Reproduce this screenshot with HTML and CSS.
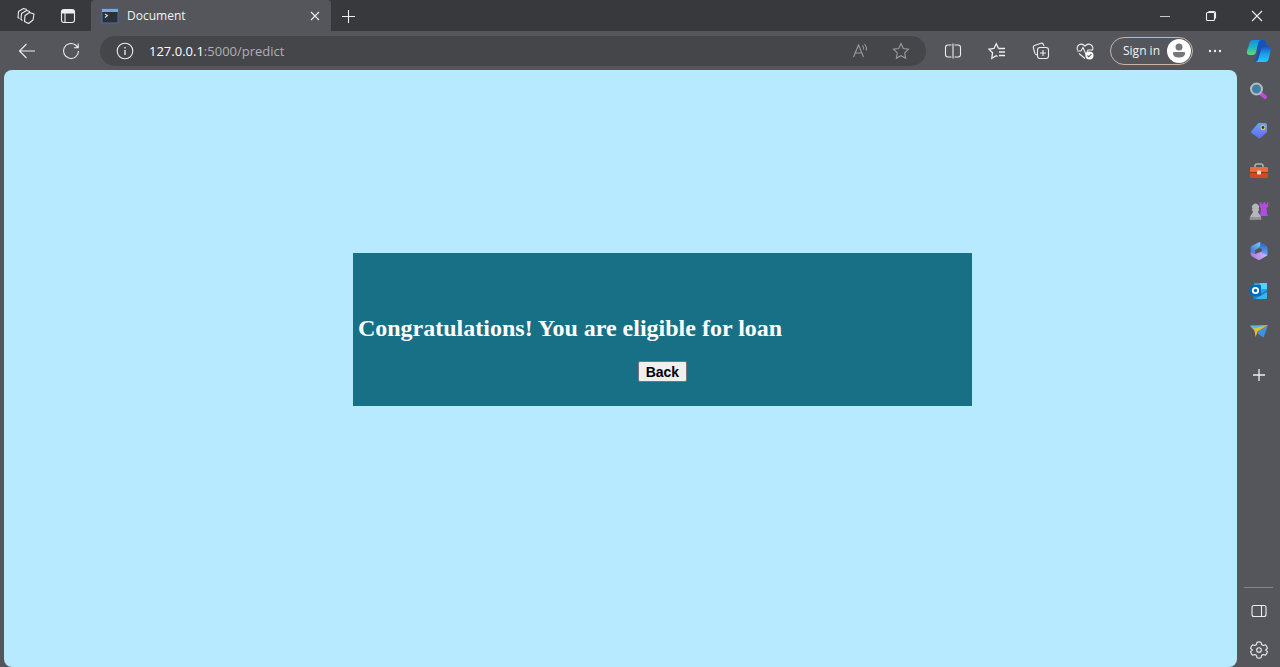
FILE: index.html
```html
<!DOCTYPE html>
<html lang="en">
<head>
<meta charset="utf-8">
<title>Document</title>
<link rel="stylesheet" href="styles.css">
</head>
<body>
<div class="browser">
  <header class="titlebar">
    <div class="title-tools">
      <button class="icon-btn" aria-label="Workspaces"><svg width="20" height="20" viewBox="0 0 20 20" stroke-linejoin="round"><path d="M9 9.500 13.500 6.500 18 8 17 14 12.500 17.500 8.500 15.500ZM6.500 14.500 5 13.500 5.500 7.500 10.500 4.500 14 5.500M3.500 12.500 2 11.500 2.500 5.500 7.500 2.500 11 3.500"/></svg></button>
      <button class="icon-btn" aria-label="Tab actions"><svg width="20" height="20" viewBox="0 0 20 20"><rect x="3.500" y="3.500" width="13" height="13" rx="2.500"/><path d="M4 5h12M4 6.500h12" stroke-width="2"/><path d="M7 7v9"/></svg></button>
    </div>
    <div class="tab">
      <svg width="18" height="16" viewBox="0 0 18 16"><rect x="1" y="1" width="16" height="14" fill="#2b3139" stroke="#486ba0"/><path d="M1 2.500h16" stroke="#79a6df" stroke-width="3"/><path d="m4 6 2.500 1.500L4 9.500" stroke="#d5dbe3"/></svg>
      <span class="tab-title">Document</span>
      <button class="tab-close" aria-label="Close tab"><svg width="10" height="10" viewBox="0 0 10 10"><path d="m1 1 8 8M9 1 1 9"/></svg></button>
    </div>
    <button class="new-tab" aria-label="New tab"><svg width="14" height="14" viewBox="0 0 14 14"><path d="M7.500 1v13M1 7.500h13"/></svg></button>
    <div class="window-controls">
      <button class="icon-btn" aria-label="Minimize"><svg width="10" height="10" viewBox="0 0 10 10"><path d="M0 5.500h10" stroke-width=".8"/></svg></button>
      <button class="icon-btn" aria-label="Restore"><svg width="12" height="12" viewBox="0 0 12 12"><rect x="1.500" y="2.500" width="8" height="8" rx="1"/><path d="M3.500 1.500H9Q10.500 1.500 10.500 3v5.500"/></svg></button>
      <button class="icon-btn" aria-label="Close"><svg width="12" height="12" viewBox="0 0 12 12"><path d="m1 1 10 10M11 1 1 11"/></svg></button>
    </div>
  </header>
  <div class="body">
    <div class="main">
      <nav class="toolbar">
        <button class="icon-btn" aria-label="Back"><svg width="20" height="20" viewBox="0 0 20 20"><path d="M18 10H2.500M9.500 3 2.500 10l7 7"/></svg></button>
        <button class="icon-btn" aria-label="Refresh"><svg width="20" height="20" viewBox="0 0 20 20"><path d="M17.500 10A7.500 7.500 0 1 1 14.500 4L17 6.500M17.200 2.500v4.300H13"/></svg></button>
        <div class="address">
          <button class="info-btn" aria-label="View site information"><svg width="18" height="18" viewBox="0 0 18 18"><circle cx="9" cy="9" r="7.800"/><path d="M9 8v5M9 5v1.400" stroke-width="1.300"/></svg></button>
          <span class="url"><span class="host">127.0.0.1</span>:5000/predict</span>
          <button class="address-btn" aria-label="Read aloud"><svg width="20" height="20" viewBox="0 0 20 20"><path d="m2.500 16 5-12 5 12M4.200 12h6.600M11.500 4.500q1.300 1.700 1.200 4M13.500 3q2.300 2.500 2 6.500"/></svg></button>
          <button class="address-btn" aria-label="Add to favorites"><svg width="20" height="20" viewBox="0 0 20 20"><path d="m10 2.500 2.300 5 5.200.7-3.800 3.700.9 5.400L10 14.700l-4.600 2.600.9-5.400L2.500 8.200l5.200-.7Z"/></svg></button>
        </div>
        <button class="icon-btn" aria-label="Split screen"><svg width="20" height="20" viewBox="0 0 20 20"><path d="M8.500 4H5Q2.500 4 2.500 6.500v7Q2.500 16 5 16h3.500M11.500 4H15q2.500 0 2.500 2.500v7Q17.500 16 15 16h-3.500M10 2.500v15"/></svg></button>
        <button class="icon-btn" aria-label="Favorites"><svg width="20" height="20" viewBox="0 0 20 20"><path d="M11.500 7.500 9.300 2.800 7 7.500l-5 .7 3.600 3.500-.8 5.500 4.400-2.500 1.500.8" stroke-width="1.300"/><path d="M11.500 7.500H18M12 11h6M12 14.500H18" stroke-width="1.300"/></svg></button>
        <button class="icon-btn" aria-label="Collections"><svg width="20" height="20" viewBox="0 0 20 20"><path d="M6 14 5 13.500Q4 13 3.800 12L2.300 6.500Q2 5 3.500 4.500L10 2.200q1.500-.5 2.200 1L13 5"/><rect x="6.500" y="6.500" width="11" height="11" rx="2.500"/><path d="M12 9v6M9 12h6"/></svg></button>
        <button class="icon-btn" aria-label="Browser essentials"><svg width="20" height="20" viewBox="0 0 20 20"><path d="M2.500 9C1 4.500 6 .8 10 5c4-4.200 9-.5 7.500 4M2 10h4l2-3.500 3 7 2-4.500h5M4 12.500l6 5"/><circle cx="14.500" cy="14.500" r="4" fill="#fff" stroke="none"/><path d="m12.500 14.500 1.300 1.300 2.600-2.600" stroke="#54565b"/></svg></button>
        <button class="sign-in">Sign in<svg width="24" height="24" viewBox="0 0 24 24"><circle cx="12" cy="12" r="12" fill="#fff" stroke="none"/><g fill="#77777a" stroke="none"><circle cx="12" cy="8" r="3.500"/><path d="M7 13h10q1.500 0 1 2-.8 3.500-6 3.500T6 15q-.5-2 1-2Z"/></g></svg></button>
        <button class="more-btn" aria-label="Settings and more"><svg width="16" height="4" viewBox="0 0 16 4"><g fill="#eee" stroke="none"><circle cx="3" cy="2" r="1.200"/><circle cx="8" cy="2" r="1.200"/><circle cx="13" cy="2" r="1.200"/></g></svg></button>
      </nav>
      <main class="page">
        <section class="result">
          <h1>Congratulations! You are eligible for loan</h1>
          <button class="back">Back</button>
        </section>
      </main>
    </div>
    <aside class="sidebar">
      <button class="side-btn" aria-label="Copilot"><svg width="26" height="26" viewBox="0 0 26 26"><defs><linearGradient id="ca" x2="0" y2="1"><stop stop-color="#168ee5"/><stop offset=".5" stop-color="#21b5bf"/><stop offset="1" stop-color="#62dc75"/></linearGradient><linearGradient id="cb" x2="0" y2="1"><stop stop-color="#154fbd"/><stop offset=".5" stop-color="#219ce9"/><stop offset="1" stop-color="#27c6ff"/></linearGradient></defs><g stroke="none"><path d="M7 2h10q2.500 0 3.300 3l.7 3h-3q-2 0-2.800 3L13 20q-1 4-4 4l3-13Z" fill="#1652bd"/><path d="M7 2h8q-2 0-3 4l-2 8q-.7 3-3.500 3H4q-4 0-3-4L3.500 5Q4.500 2 7 2Z" fill="url(#ca)"/><path d="M19 8h3q3.500 0 2.700 4l-2 9q-.8 3-3.700 3H9q2.500 0 3.500-3.500l2.700-9Q16 8 19 8Z" fill="url(#cb)"/></g></svg></button>
      <button class="side-btn" aria-label="Search"><svg width="20" height="20" viewBox="0 0 20 20"><path d="m11 12 5 4" stroke="#b94de0" stroke-width="4" stroke-linecap="round"/><circle cx="7.500" cy="8" r="5.500" fill="#3d82a5" stroke="#b9bdc2" stroke-width="2"/></svg></button>
      <button class="side-btn" aria-label="Shopping"><svg width="20" height="20" viewBox="0 0 20 20"><defs><linearGradient id="tag" x2="0" y2="1"><stop stop-color="#62a6fa"/><stop offset="1" stop-color="#6867ef"/></linearGradient></defs><path d="M10 2h6q2 0 2 2v6q0 1-1 2l-5.500 5q-1 1-2 0L2.500 12q-1-1 0-2L8.500 3Q9 2 10 2Z" fill="url(#tag)" stroke="none"/><circle cx="14" cy="6.500" r="2" fill="#303748" stroke="#e7c45c"/></svg></button>
      <button class="side-btn" aria-label="Tools"><svg width="20" height="20" viewBox="0 0 20 20"><path d="M6 7V5q0-2 2-2h4q2 0 2 2v2" stroke="#a9b4bd" stroke-width="1.500"/><rect x="1" y="6" width="18" height="11" rx="1.500" fill="#d44a20" stroke="none"/><path d="M1 7q0-1 1.500-1h15Q19 6 19 7v4H1Z" fill="#ef6b3c" stroke="none"/><path d="M1 11.500h18" stroke="#983415"/><rect x="8" y="9.500" width="4" height="4" rx="1" fill="#e8e0dc" stroke="none"/></svg></button>
      <button class="side-btn" aria-label="Games"><svg width="20" height="20" viewBox="0 0 20 20"><g stroke="none"><path d="M10.500 1l2 .5.3 1.700 1.500-.2V1h2v2l1.500.2.200-1.700 1.500-.5-.5 5-1.500 1 .5 6q1 1 1 2h-8l1-8-1.300-1Z" fill="#b04be5"/><path d="M3.500 8a3.500 3.500 0 1 1 6 0l1 1-1.500 1.200q.2 2.300 2 3.800 1.300 1.500 1.200 4.500H.8q0-3 1.200-4.500 1.800-1.500 2-3.800L2.500 9Z" fill="#b5b6b8"/><path d="M.8 16h11.400v2.500H.8Z" fill="#929396"/></g></svg></button>
      <button class="side-btn" aria-label="Microsoft 365"><svg width="20" height="20" viewBox="0 0 20 20"><defs><linearGradient id="ma" x1="1" x2="0" y2="1"><stop stop-color="#72d1fa"/><stop offset="1" stop-color="#3f68cf"/></linearGradient><linearGradient id="mb" x2="0" y2="1"><stop stop-color="#285ec3"/><stop offset="1" stop-color="#6cabff"/></linearGradient><linearGradient id="mc" x2="1"><stop stop-color="#ad78dc"/><stop offset="1" stop-color="#c8b4fa"/></linearGradient></defs><g stroke="none"><path d="M11.500 1v5L6 9v5L2.500 12.500Q1.500 12 1.500 10.500V7Q1.500 5.500 3 4.700L9.500 1.500Z" fill="url(#ma)"/><path d="m11.500 1 5.500 3.500q1.500 1 1.500 2.500v6.500q0 1-1 1.500L13 12.500V8l-4-1.500 2.500-1.500Z" fill="url(#mb)"/><path d="m1.500 11 4.500 2 7-2.500V12l5 2q-.5 1-1.500 1.600L11 18.700q-1 .5-2 0l-5.500-3Q1.500 14.500 1.500 12Z" fill="url(#mc)"/></g></svg></button>
      <button class="side-btn" aria-label="Outlook"><svg width="20" height="20" viewBox="0 0 20 20"><g stroke="none"><rect x="5" y="2" width="13" height="12" rx="1" fill="#2c9eea"/><path d="M11 2h7v6h-7Z" fill="#50d5fa"/><path d="M4 9l7 4 7-4v7.500q0 1.500-1.500 1.500h-11Q4 18 4 16.500Z" fill="#187fd0"/><path d="m6 18 12-7v5.500q0 1.500-1.500 1.500Z" fill="#36b8ef"/><rect x="1" y="4" width="11" height="11" rx="1" fill="#0669b5"/></g><circle cx="6.500" cy="9.500" r="2.700" stroke="#fff" stroke-width="1.800"/></svg></button>
      <button class="side-btn" aria-label="Drop"><svg width="20" height="20" viewBox="0 0 20 20"><g stroke="none"><path d="M1 4.500 19 4 6 10Z" fill="#4cbbec"/><path d="M19 4 7.500 11.500l6 4.500q1 .7 1.500-.5Z" fill="#3e91e1"/><path d="m1 4.500 5 5.500L19 4 5.500 7.500Z" fill="#dfc33a"/><path d="m5.500 9.500 1 6.500 1.500-3.500V11L19 4Z" fill="#ebb92f"/></g></svg></button>
      <button class="side-btn" aria-label="Customize"><svg width="14" height="14" viewBox="0 0 14 14"><path d="M7 1v12M1 7h12" stroke-width="1.300"/></svg></button>
      <div class="side-bottom">
        <button class="side-btn side-toggle" aria-label="Hide sidebar"><svg width="20" height="20" viewBox="0 0 20 20"><rect x="3" y="4.500" width="14" height="11" rx="2"/><path d="M12.500 4.500v11"/></svg></button>
        <button class="side-btn side-settings" aria-label="Settings"><svg width="20" height="20" viewBox="0 0 20 20"><path d="M8 2.200Q10 1.600 12 2.200L12.500 4.500 14.200 5.500 16.500 4.800Q18 6.300 18.400 8.300L16.700 10 18.400 11.700Q18 13.700 16.500 15.200L14.200 14.500 12.500 15.500 12 17.800Q10 18.400 8 17.800L7.500 15.500 5.800 14.500 3.500 15.200Q2 13.700 1.600 11.700L3.300 10 1.600 8.300Q2 6.300 3.500 4.800L5.800 5.500 7.500 4.500Z" stroke-linejoin="round"/><circle cx="10" cy="10" r="2.300"/></svg></button>
      </div>
    </aside>
  </div>
</div>
</body>
</html>
```
FILE: styles.css
```css
* {
  box-sizing: border-box;
}

body {
  margin: 0;
  font-family: "Open Sans", "Noto Sans", sans-serif;
}

button {
  border: 0;
  padding: 0;
  background: none;
  color: inherit;
  font: inherit;
}

svg {
  display: block;
  flex: none;
  fill: none;
  stroke: #eeeeee;
  stroke-width: 1.1;
}

.browser {
  display: flex;
  flex-direction: column;
  min-height: 100vh;
  background: #54565b;
  color: #f2f2f2;
}

.titlebar {
  display: flex;
  height: 31px;
  background: #38393d;
}

.title-tools {
  display: flex;
  width: 91px;
  padding-left: 5px;
}

.icon-btn,
.side-btn,
.info-btn,
.address-btn,
.more-btn,
.tab-close,
.new-tab {
  display: flex;
  align-items: center;
  justify-content: center;
}

.icon-btn {
  width: 44px;
}

.title-tools .icon-btn {
  width: 42px;
}

.tab {
  display: flex;
  align-items: center;
  width: 240px;
  padding: 0 10px;
  background: #54565b;
  border-radius: 4px 4px 0 0;
}

.tab-title {
  flex: 1;
  margin-left: 8px;
  font-size: 12px;
  line-height: 16px;
}

.tab-close {
  width: 12px;
  height: 24px;
}

.new-tab {
  width: 34px;
}

.window-controls {
  display: flex;
  margin-left: auto;
}

.window-controls .icon-btn {
  width: 46px;
}

.body {
  display: flex;
  flex: 1;
}

.main {
  display: flex;
  flex: 1;
  flex-direction: column;
}

.toolbar {
  display: flex;
  align-items: center;
  height: 39px;
  padding-left: 5px;
}

.address {
  display: flex;
  flex: 1;
  align-items: center;
  height: 30px;
  margin: 0 5px 0 7px;
  padding: 0 5px;
  border-radius: 15px;
  background: #454649;
}

.info-btn,
.address-btn {
  width: 40px;
  height: 30px;
}

.address-btn svg {
  stroke: #9a9b9d;
}

.url {
  flex: 1;
  margin-left: 4px;
  color: #aeb0b2;
  font-size: 13px;
}

.host {
  color: #ffffff;
}

.sign-in {
  display: flex;
  align-items: center;
  justify-content: space-between;
  width: 83px;
  height: 28px;
  margin-left: 3px;
  padding: 0 1px 0 12px;
  border: 1px solid #cbb5a8;
  border-radius: 14px;
  font-size: 12px;
}

.more-btn {
  width: 44px;
  height: 30px;
}

.page {
  flex: 1;
  margin-left: 4px;
  border-radius: 8px;
  background: #b7eaff;
}

.result {
  width: 50.2%;
  margin: 183px 0 0 28.3%;
  padding: 62px 5px 23px;
  background: #187086;
  text-align: center;
}

.result h1 {
  margin: 0 0 20px;
  color: #ffffff;
  font: bold 24px/26px "Liberation Serif", serif;
  text-align: left;
}

.back {
  height: 21px;
  padding: 0 7px;
  border: 1px solid #767676;
  border-radius: 2px;
  background: #efefef;
  color: #000000;
  font: bold 14px/18px "Liberation Sans", sans-serif;
  vertical-align: top;
}

.sidebar {
  display: flex;
  flex-direction: column;
  width: 43px;
}

.side-btn {
  width: 43px;
  height: 40px;
}

.side-btn[aria-label="Customize"] {
  height: 47px;
}

.side-bottom {
  margin: auto 7px 0;
  border-top: 1px solid #85878a;
}

.side-bottom .side-btn {
  width: 29px;
}

.side-bottom .side-toggle {
  height: 45px;
}

.side-bottom .side-settings {
  height: 34px;
}
```
